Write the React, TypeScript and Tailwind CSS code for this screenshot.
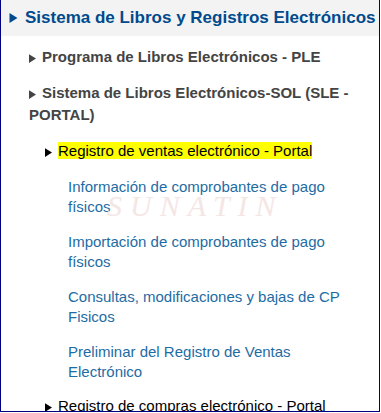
import React from "react";

function Tri({ className }: { className: string }) {
  return (
    <svg viewBox="0 0 8 10" className={className}>
      <path d="M0 0 L8 5 L0 10 Z" fill="currentColor" />
    </svg>
  );
}

const links = [
  "Información de comprobantes de pago físicos",
  "Importación de comprobantes de pago físicos",
  "Consultas, modificaciones y bajas de CP Fisicos",
  "Preliminar del Registro de Ventas Electrónico",
];

export default function App() {
  return (
    <div className="w-[381px] h-[413px] bg-white overflow-hidden" style={{ fontFamily: '"Liberation Sans", Arial, sans-serif' }}>
      <div className="relative w-[380px] h-[412px] border-x border-b border-[#000080] overflow-hidden">
        <div className="h-[36px] bg-[#f3f3f3] flex items-center pl-[8px] gap-[7px]">
          <Tri className="w-[9px] h-[10px] text-[#004a8d] shrink-0" />
          <span className="text-[17px] font-bold text-[#004a8d] whitespace-nowrap">Sistema de Libros y Registros Electrónicos</span>
        </div>

        <div className="pl-[28px] pr-[27px] pt-[10px]">
          <div className="text-[15px] font-bold text-[#444444] leading-[22px]">
            <Tri className="inline-block w-[7px] h-[9px] mr-[6px] align-[-1px] text-[#444444]" />
            Programa de Libros Electrónicos - PLE
          </div>
          <div className="mt-[14px] text-[15px] font-bold text-[#444444] leading-[22px]">
            <Tri className="inline-block w-[7px] h-[9px] mr-[6px] align-[-1px] text-[#444444]" />
            Sistema de Libros Electrónicos-SOL (SLE - PORTAL)
          </div>

          <div className="mt-[15px] pl-[16px] text-[15px] leading-[20px] text-black">
            <Tri className="inline-block w-[7px] h-[9px] mr-[6px] align-[-1px] text-black" />
            <span className="bg-[#ffff00]">Registro de ventas electrónico - Portal</span>
          </div>

          <div className="pl-[39px] mt-[16px] flex flex-col gap-[16px]">
            {links.map((l) => (
              <div key={l} className="text-[15px] leading-[19.5px] text-[#1d6ca4]">{l}</div>
            ))}
          </div>

          <div className="mt-[15px] pl-[16px] text-[15px] leading-[20px] text-black whitespace-nowrap">
            <Tri className="inline-block w-[7px] h-[9px] mr-[6px] align-[-1px] text-black" />
            Registro de compras electrónico - Portal
          </div>
        </div>

        <div className="absolute left-[106px] top-[183px] text-[30px] italic tracking-[8px] text-[#f5e6e6] pointer-events-none" style={{ fontFamily: '"Liberation Serif", "Times New Roman", serif' }}>
          SUNATIN
        </div>
      </div>
    </div>
  );
}
